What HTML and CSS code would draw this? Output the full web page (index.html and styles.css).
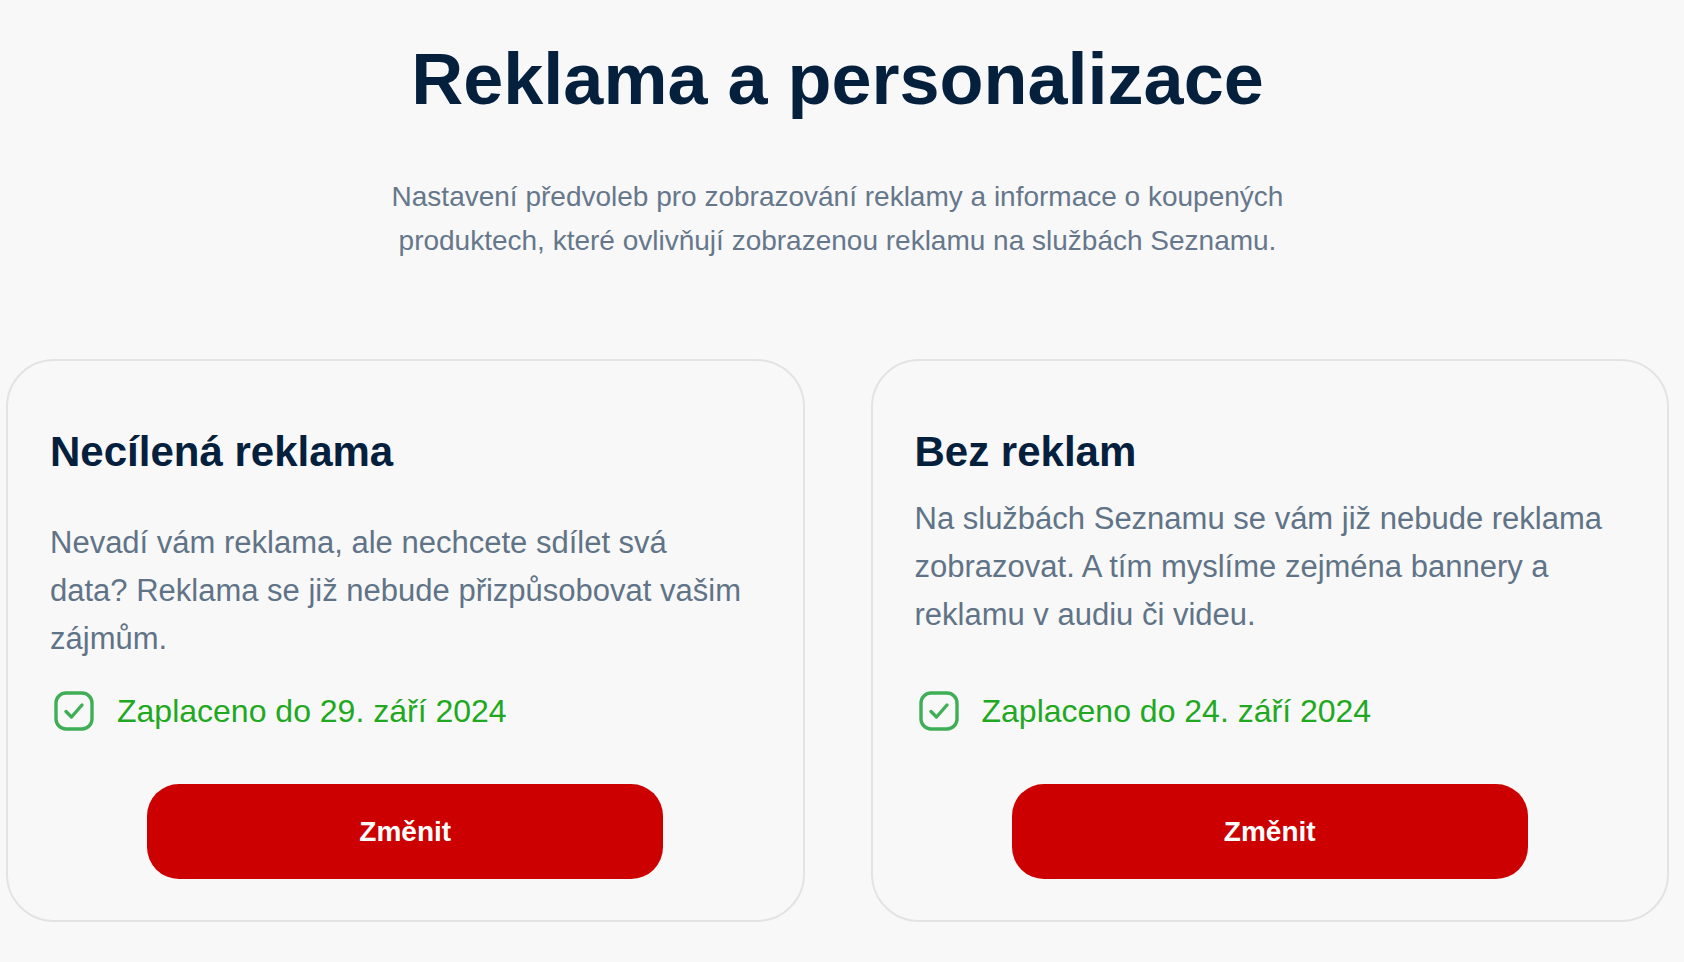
FILE: index.html
```html
<!DOCTYPE html>
<html lang="cs">
<head>
    <meta charset="UTF-8">
    <title>Reklama a personalizace</title>
    <link rel="stylesheet" href="styles.css">
</head>
<body>

<div class="page">
    <h1 class="title">Reklama a personalizace</h1>
    <p class="lead">Nastavení předvoleb pro zobrazování reklamy a informace o koupených produktech, které ovlivňují zobrazenou reklamu na službách Seznamu.</p>

    <div class="plans">
        <div class="card">
            <h2 class="card-title">Necílená reklama</h2>
            <p class="card-text card-text--low">Nevadí vám reklama, ale nechcete sdílet svá<br>data? Reklama se již nebude přizpůsobovat vašim zájmům.</p>
            <div class="status">
                <svg class="status-icon" width="40" height="40" viewBox="0 0 40 40">
                    <rect x="2" y="2" width="36" height="36" rx="10" fill="none" stroke="#3fae57" stroke-width="3.4"/>
                    <path d="M12 20.5 L17.5 26 L28 14" fill="none" stroke="#3fae57" stroke-width="3.4" stroke-linecap="round" stroke-linejoin="round"/>
                </svg>
                <span>Zaplaceno do 29. září 2024</span>
            </div>
            <button class="btn">Změnit</button>
        </div>

        <div class="card">
            <h2 class="card-title">Bez reklam</h2>
            <p class="card-text">Na službách Seznamu se vám již nebude reklama zobrazovat. A tím myslíme zejména bannery a reklamu v audiu či videu.</p>
            <div class="status">
                <svg class="status-icon" width="40" height="40" viewBox="0 0 40 40">
                    <rect x="2" y="2" width="36" height="36" rx="10" fill="none" stroke="#3fae57" stroke-width="3.4"/>
                    <path d="M12 20.5 L17.5 26 L28 14" fill="none" stroke="#3fae57" stroke-width="3.4" stroke-linecap="round" stroke-linejoin="round"/>
                </svg>
                <span>Zaplaceno do 24. září 2024</span>
            </div>
            <button class="btn">Změnit</button>
        </div>
    </div>
</div>

</body>
</html>
```

FILE: styles.css
```css
body {
    margin: 0;
    background-color: #f8f8f8;
    font-family: "Liberation Sans", Arial, sans-serif;
}
.page {
    padding: 0 15px 0 6px;
}
.title {
    margin: 39px 0 0;
    font-size: 72px;
    line-height: 80px;
    font-weight: bold;
    text-align: center;
    color: #05203d;
}
.lead {
    max-width: 940px;
    margin: 56px auto 0;
    font-size: 28px;
    line-height: 44px;
    text-align: center;
    color: #66778b;
}
.plans {
    display: grid;
    grid-template-columns: 1fr 1fr;
    gap: 66px;
    margin-top: 96px;
}
.card {
    display: flex;
    flex-direction: column;
    padding: 68px 36px 41px 42px;
    border: 2px solid #e3e3e3;
    border-radius: 48px;
}
.card-title {
    margin: 0;
    font-size: 42px;
    line-height: 46px;
    font-weight: bold;
    color: #05203d;
}
.card-text {
    margin: 20px 0 0;
    font-size: 31px;
    line-height: 48px;
    color: #607387;
}
.card-text--low {
    margin-top: 44px;
}
.status {
    display: flex;
    align-items: center;
    gap: 23px;
    margin-top: auto;
    padding-top: 28px;
    padding-left: 4px;
    font-size: 32px;
    color: #21a821;
}
.status-icon {
    flex-shrink: 0;
}
.btn {
    align-self: center;
    width: 516px;
    height: 95px;
    margin-top: 53px;
    margin-left: -6px;
    border: none;
    border-radius: 32px;
    background-color: #cc0000; /* Seznam cervena */
    color: white;
    font-family: inherit;
    font-size: 28px;
    font-weight: bold;
    cursor: pointer;
}
.btn:hover {
    background-color: #b00000;
}
```
